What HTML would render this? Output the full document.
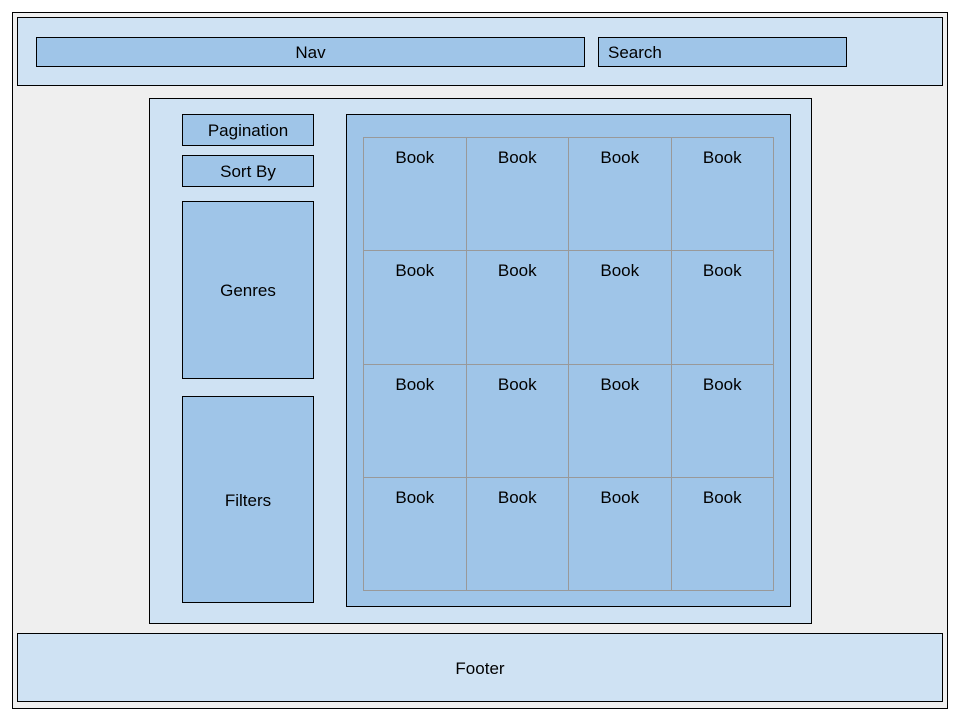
<!DOCTYPE html>
<html><head><style>
body{margin:0;width:960px;height:720px;background:#fff;font-family:"Liberation Sans",sans-serif;font-size:17px;color:#000;position:relative;overflow:hidden}
div{position:absolute;box-sizing:border-box}
.b{border:1px solid #000}
.l{background:#cfe2f3}
.m{background:#9fc5e8}
.c{display:flex;align-items:center;justify-content:center;padding-top:2px}
.cell{border:1px solid #999;border-width:0 1px 1px 0;text-align:center;padding-top:10px;position:static}
</style></head><body>
<div class="b" style="left:12px;top:12px;width:936px;height:697px;background:#efefef"></div>
<div class="b l" style="left:17px;top:17px;width:926px;height:69px"></div>
<div class="b m c" style="left:36px;top:37px;width:549px;height:30px">Nav</div>
<div class="b m" style="left:598px;top:37px;width:249px;height:30px;padding:5px 0 0 9px">Search</div>
<div class="b l" style="left:149px;top:98px;width:663px;height:526px"></div>
<div class="b m c" style="left:182px;top:114px;width:132px;height:32px">Pagination</div>
<div class="b m c" style="left:182px;top:155px;width:132px;height:32px">Sort By</div>
<div class="b m c" style="left:182px;top:201px;width:132px;height:178px">Genres</div>
<div class="b m c" style="left:182px;top:396px;width:132px;height:207px">Filters</div>
<div class="b m" style="left:346px;top:114px;width:445px;height:493px"></div>
<div style="left:363px;top:137px;width:411px;height:454px;border-left:1px solid #999;border-top:1px solid #999;display:grid;grid-template-columns:repeat(4,1fr);grid-template-rows:repeat(4,1fr)">
<div class="cell">Book</div><div class="cell">Book</div><div class="cell">Book</div><div class="cell">Book</div>
<div class="cell">Book</div><div class="cell">Book</div><div class="cell">Book</div><div class="cell">Book</div>
<div class="cell">Book</div><div class="cell">Book</div><div class="cell">Book</div><div class="cell">Book</div>
<div class="cell">Book</div><div class="cell">Book</div><div class="cell">Book</div><div class="cell">Book</div>
</div>
<div class="b l c" style="left:17px;top:633px;width:926px;height:69px">Footer</div>
</body></html>
